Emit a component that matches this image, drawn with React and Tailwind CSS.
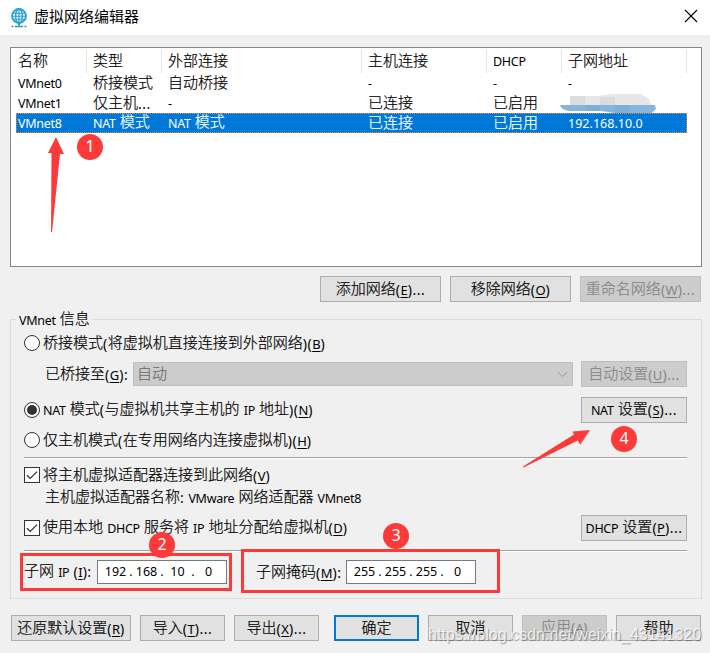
import React from 'react';
import clsx from 'clsx';

const columns = [
    { key: 'name', label: '名称', width: 'w-[71px] pl-0.5' },
    { key: 'type', label: '类型', width: 'w-[75px] pl-1.5' },
    { key: 'external', label: '外部连接', width: 'w-[200px] pl-1.5' },
    { key: 'host', label: '主机连接', width: 'w-[125px] pl-1.5' },
    { key: 'dhcp', label: 'DHCP', width: 'w-[75px] pl-1.5' },
    { key: 'subnet', label: '子网地址', width: 'w-[125px] pl-1.5' },
];

const networks = [
    { name: 'VMnet0', type: '桥接模式', external: '自动桥接', host: '-', dhcp: '-', subnet: '-' },
    { name: 'VMnet1', type: '仅主机...', external: '-', host: '已连接', dhcp: '已启用', subnet: '' },
    { name: 'VMnet8', type: 'NAT 模式', external: 'NAT 模式', host: '已连接', dhcp: '已启用', subnet: '192.168.10.0' },
];

const runStyle = (run) => {
    if (/[\u4e00-\u9fff]/.test(run)) return 'relative -top-px text-[15px] font-light [-webkit-text-stroke:0.2px]';
    if (run[0] === '&') return 'text-[13px] underline underline-offset-2';
    if (/^[\d.]{5,}$/.test(run)) return 'text-[12.5px] tracking-[0.03px]';
    if (/^[(): .]+$/.test(run)) return 'text-[14px] tracking-[0.5px]';
    return 'text-[12.5px] tracking-[-0.3px]';
};

// Chinese runs are set larger than latin ones; "&X" underlines the access key X
const Label = ({ text, className }) => (
    <span className={clsx('whitespace-pre leading-5', className)}>
        {text.match(/[\u4e00-\u9fff]+|&[A-Z]|\d[\d.]{4,}|[(): .]+|[A-Za-z\d-]+/g)?.map((run, i) => (
            <span key={i} className={runStyle(run)}>{run.replace('&', '')}</span>
        ))}
    </span>
);

const Button = ({ text, className, disabled, primary }) => (
    <button
        className={clsx(
            'flex h-[26px] shrink-0 items-center justify-center',
            primary ? 'border-2 border-[#0078d7]' : 'border',
            disabled ? 'border-[#bfbfbf] bg-[#cccccc] text-[#858585]' : 'bg-[#e1e1e1]',
            !primary && !disabled && 'border-[#adadad]',
            className
        )}
    >
        <Label text={text} />
    </button>
);

const Radio = ({ text, checked }) => (
    <div className="flex items-center">
        <span className="mr-[3px] flex size-4 items-center justify-center rounded-full border border-[#333] bg-white">
            {checked && <span className="size-2.5 rounded-full bg-[#333]" />}
        </span>
        <Label text={text} />
    </div>
);

const Checkbox = ({ text }) => (
    <div className="flex items-center">
        <span className="mr-[3px] size-4 border border-[#333] bg-white">
            <svg viewBox="0 0 14 14" className="size-3.5" fill="none" stroke="#333" strokeWidth="1.3">
                <path d="M2 7.2l3.2 3.2L12 3.6" />
            </svg>
        </span>
        <Label text={text} />
    </div>
);

const Divider = ({ className }) => (
    <div className={clsx('h-0.5 border-t border-b border-t-[#a0a0a0] border-b-white', className)} />
);

const IpField = ({ parts }) => (
    <div className="flex h-6 w-[130px] items-center border border-[#7a7a7a] bg-white pl-1.5 text-[12.5px]">
        {parts.map((part, i) => (
            <React.Fragment key={i}>
                {i > 0 && <span className="w-2 text-center">.</span>}
                <span className="w-[23px] text-center">{part}</span>
            </React.Fragment>
        ))}
    </div>
);

const Badge = ({ number, className }) => (
    <span
        className={clsx(
            'absolute flex size-[26px] items-center justify-center rounded-full bg-[#fc3a3a] pb-0.5 text-[16px] leading-none text-white',
            className
        )}
    >
        {number}
    </span>
);

const TitleBar = () => (
    <div className="flex h-[35px] items-center bg-white pl-2.5">
        <svg width="18" height="20" viewBox="0 0 18 20" fill="none">
            <circle cx="9" cy="8" r="7" fill="#e5f5fc" stroke="#2b9fd0" strokeWidth="1.8" />
            <ellipse cx="9" cy="8" rx="3.4" ry="7" stroke="#2b9fd0" strokeWidth="1.3" />
            <path d="M2.5 5.2h13M2 8.2h14M2.5 11.2h13M9 1v14" stroke="#2b9fd0" strokeWidth="1.1" />
            <path d="M9 15v2.5" stroke="#279f9a" strokeWidth="2" />
            <path d="M1.5 18.5h2M5 18.5h8M14.5 18.5h2" stroke="#279f9a" strokeWidth="1.6" />
        </svg>
        <span className="mt-[-3px] ml-1.5 text-[15px] leading-5">虚拟网络编辑器</span>
        <svg className="mt-[-3px] mr-3 ml-auto" width="14" height="14" viewBox="0 0 14 14" stroke="#000" strokeWidth="1.1">
            <path d="M1 1l12 12M13 1L1 13" />
        </svg>
    </div>
);

const NetworkList = () => (
    <div className="relative mx-[10px] mt-3 h-[220px] w-[692px] border border-[#828790] bg-white pt-px pl-[5px]">
        <div className="flex h-6">
            {columns.map((col) => (
                <div key={col.key} className={clsx('flex h-6 items-center border-r border-[#e5e5e5]', col.width)}>
                    <Label text={col.label} />
                </div>
            ))}
        </div>
        {networks.map((net) => (
            <div
                key={net.name}
                className={clsx(
                    'flex h-5 w-[671px] items-center',
                    net.name === 'VMnet8' && 'bg-[#0078d7] text-white outline-1 -outline-offset-1 outline-dotted outline-[#ff8728]'
                )}
            >
                {columns.map((col) => (
                    <Label key={col.key} text={net[col.key]} className={clsx('shrink-0', col.width)} />
                ))}
            </div>
        ))}
        {/* smudged-out subnet of VMnet1 */}
        <svg className="absolute top-[46px] left-[548px]" width="98" height="20" viewBox="0 0 98 20">
            <path d="M11 2h29l12-2h29l8 4 4 7H11z" fill="#e7e7ea" />
            <path d="M11 2h15v9H11zM41 3h15v8H41z" fill="#dcdcdf" />
            <path d="M1 11h95l1 4-4 4H56l-14-2H10q-8-1-9-6z" fill="#87b5dc" />
            <path d="M26 11h15v6H26zM56 11h15v8H56z" fill="#7eafd8" />
        </svg>
        <svg className="absolute top-[89px] left-[36px]" width="18" height="97" viewBox="47 137 18 97" fill="#fc3a3a">
            <path d="M56 137l8 17h-4l-8 78h-1l.5-79H48z" />
        </svg>
        <Badge number="1" className="top-[86px] left-[66px]" />
    </div>
);

const NetworkInfo = () => (
    <div className="relative mx-[10px] mt-[17px] h-[280px] w-[692px] border border-[#dcdcdc] pt-2 pr-3.5 pl-[13px]">
        <Label text="VMnet 信息" className="absolute -top-[11px] left-[5px] bg-[#f0f0f0] px-[3px]" />
        <div className="flex h-[30px] items-center">
            <Radio text="桥接模式(将虚拟机直接连接到外部网络)(&B)" />
        </div>
        <div className="mt-[3px] flex h-[26px] items-center">
            <Label text="已桥接至(&G):" className="w-[109px] pl-[21px]" />
            <div className="mr-2 flex h-6 w-[440px] items-center justify-between border border-[#bfbfbf] bg-[#cccccc] pr-1 pl-[3px] text-[#6d6d6d]">
                <Label text="自动" />
                <svg width="11" height="7" viewBox="0 0 11 7" fill="none" stroke="#9a9a9a">
                    <path d="M1 1l4.5 4.5L10 1" />
                </svg>
            </div>
            <Button text="自动设置(&U)..." disabled className="w-[106px]" />
        </div>
        <div className="mt-2.5 flex h-[26px] items-center justify-between">
            <Radio text="NAT 模式(与虚拟机共享主机的 IP 地址)(&N)" checked />
            <Button text="NAT 设置(&S)..." className="w-[106px]" />
        </div>
        <div className="mt-[7px] flex h-5 items-center">
            <Radio text="仅主机模式(在专用网络内连接虚拟机)(&H)" />
        </div>
        <Divider className="mt-[7px]" />
        <div className="mt-1.5 flex h-5 items-center">
            <Checkbox text="将主机虚拟适配器连接到此网络(&V)" />
        </div>
        <div className="mt-[3px] flex h-5 items-center pl-[21px]">
            <Label text="主机虚拟适配器名称: VMware 网络适配器 VMnet8" />
        </div>
        <div className="mt-[7px] flex h-[26px] items-center justify-between">
            <Checkbox text="使用本地 DHCP 服务将 IP 地址分配给虚拟机(&D)" />
            <Button text="DHCP 设置(&P)..." className="w-[106px]" />
        </div>
        <Divider className="mt-[9px]" />
        <div className="relative mt-[-3px] -ml-1 flex items-start">
            <div className="mt-1 flex h-[38px] w-[212px] items-center border-3 border-[#fc3a3a] pl-px">
                <Label text="子网 IP (&I):" className="w-[73px]" />
                <IpField parts={['192', '168', '10', '0']} />
            </div>
            <div className="ml-[9px] flex h-11 w-[259px] items-center border-3 border-[#fc3a3a] pt-0.5 pl-3">
                <Label text="子网掩码(&M):" className="w-[90px]" />
                <IpField parts={['255', '255', '255', '0']} />
            </div>
        </div>
        <svg className="absolute top-[109px] left-[511px]" width="70" height="40" viewBox="522 429 70 40" fill="#fc3a3a">
            <path d="M590 430l-9.700 14.500-2.600-4L523.500 467.500l-.5-1L574 434.500l-1.500-3z" />
        </svg>
        <Badge number="2" className="top-[212px] left-[138px]" />
        <Badge number="3" className="top-[203px] left-[372px]" />
        <Badge number="4" className="top-[106px] left-[600px]" />
    </div>
);

const App = () => (
    <div className="relative h-[653px] w-[710px] overflow-hidden bg-[#f0f0f0] font-['Noto_Sans','Noto_Sans_CJK_SC',sans-serif] text-black">
        <TitleBar />
        <NetworkList />
        <div className="mt-[9px] flex gap-[9px] pl-[320px]">
            <Button text="添加网络(&E)..." className="w-[121px]" />
            <Button text="移除网络(&O)" className="w-[121px]" />
            <Button text="重命名网络(&W)..." disabled className="w-[121px]" />
        </div>
        <NetworkInfo />
        <div className="mt-4 flex gap-[9px] pl-[11px]">
            <Button text="还原默认设置(&R)" className="w-[120px]" />
            <Button text="导入(&T)..." className="w-[85px]" />
            <Button text="导出(&X)..." className="mr-1.5 w-[85px]" />
            <Button text="确定" primary className="w-[85px]" />
            <Button text="取消" className="w-[85px]" />
            <Button text="应用(A)" disabled className="w-[85px]" />
            <Button text="帮助" className="w-[85px]" />
        </div>
        <span className="absolute top-[625px] left-[428px] font-['Liberation_Sans',sans-serif] text-[16px] leading-5 tracking-[0.03px] whitespace-nowrap text-white/75 [text-shadow:1px_1px_1px_rgba(0,0,0,0.35)]">
            https://blog.csdn.net/weixin_43141320
        </span>
    </div>
);

export default App;
